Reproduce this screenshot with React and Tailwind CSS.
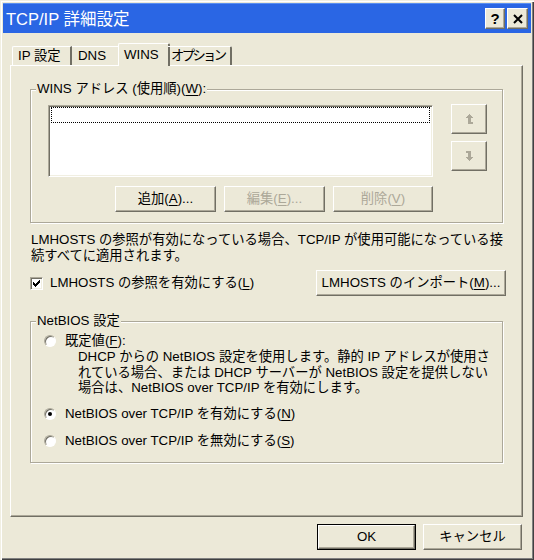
import React from "react";

const U = ({ children }) => <span className="underline underline-offset-[2px]">{children}</span>;

function Raised({ className = "", children }) {
  return (
    <div
      className={
        "flex items-center justify-center bg-[#ece9d8] border border-t-white border-l-white border-r-[#716f64] border-b-[#716f64] shadow-[inset_-1px_-1px_0_#aca899] " +
        className
      }
    >
      {children}
    </div>
  );
}

function Radio({ checked, children }) {
  return (
    <div className="flex items-center h-[16px]">
      <div className="w-[12px] h-[12px] rounded-full bg-white border border-t-[#aca899] border-l-[#aca899] border-r-white border-b-white shadow-[inset_1px_1px_0_#716f64] flex items-center justify-center">
        {checked && <div className="w-[4px] h-[4px] rounded-full bg-black" />}
      </div>
      <span className="ml-[9px] whitespace-nowrap">{children}</span>
    </div>
  );
}

function UpIcon() {
  return (
    <svg width="7" height="11" viewBox="0 0 7 11" shapeRendering="crispEdges">
      <g fill="#aca899">
        <rect x="3" y="0" width="1" height="1" />
        <rect x="2" y="1" width="3" height="1" />
        <rect x="1" y="2" width="5" height="1" />
        <rect x="0" y="3" width="7" height="1" />
        <rect x="2" y="4" width="3" height="5" />
        <rect x="2" y="8" width="5" height="2" />
      </g>
    </svg>
  );
}

function DownIcon() {
  return (
    <svg width="7" height="11" viewBox="0 0 7 11" shapeRendering="crispEdges">
      <g fill="#aca899">
        <rect x="0" y="0" width="5" height="2" />
        <rect x="2" y="2" width="3" height="5" />
        <rect x="0" y="6" width="7" height="1" />
        <rect x="1" y="7" width="5" height="1" />
        <rect x="2" y="8" width="3" height="1" />
        <rect x="3" y="9" width="1" height="1" />
      </g>
    </svg>
  );
}

export default function App() {
  return (
    <div className="w-[534px] h-[560px] p-[3px] bg-[#ece9d8] flex flex-col text-black text-[13.3px] leading-[16px] font-['Liberation_Sans','Noto_Sans_CJK_JP',sans-serif] shadow-[inset_1px_1px_0_#f1efe2,inset_2px_2px_0_#fff,inset_-1px_-1px_0_#404040,inset_-2px_-2px_0_#808080] overflow-hidden">
      {/* Title bar */}
      <div className="h-[30px] flex items-center pl-[3px] bg-[#2a66e4] border-t border-t-[#5a8ff0]">
        <span className="text-white text-[16.5px] whitespace-nowrap">TCP/IP 詳細設定</span>
        <div className="ml-auto mr-[3px] flex gap-[2px]">
          <Raised className="w-[20px] h-[21px]">
            <span className="font-bold text-[15px] leading-none font-['Liberation_Sans',sans-serif]">?</span>
          </Raised>
          <Raised className="w-[21px] h-[21px]">
            <svg width="10" height="10" viewBox="0 0 10 10">
              <path d="M1 1 L9 9 M9 1 L1 9" stroke="#000" strokeWidth="2" />
            </svg>
          </Raised>
        </div>
      </div>

      {/* Tabs */}
      <div className="mt-[10px] ml-[9px] flex items-end h-[22px] relative z-10">
        <div className="w-[60px] h-[19px] flex items-center pl-[5px] border-t border-l border-t-white border-l-white border-r-2 border-r-[#716f64] rounded-tl-[2px] whitespace-nowrap">
          IP 設定
        </div>
        <div className="w-[48px] h-[19px] flex items-center pl-[6px] border-t border-t-white whitespace-nowrap">
          DNS
        </div>
        <div className="-mx-[2px] -mb-px w-[52px] h-[23px] flex items-start pt-[3px] pl-[5px] bg-[#ece9d8] border-t border-l border-t-white border-l-white border-r-2 border-r-[#716f64] rounded-tl-[2px] rounded-tr-[2px] whitespace-nowrap">
          WINS
        </div>
        <div className="w-[64px] h-[19px] flex items-center pl-[3px] border-t border-t-white border-r-2 border-r-[#716f64] rounded-tr-[2px] whitespace-nowrap">
          <span className="tracking-[-2.6px]">オプション</span>
        </div>
      </div>

      {/* Panel */}
      <div className="ml-[7px] w-[513px] h-[452px] flex flex-col border-t border-l border-t-white border-l-white border-r border-b border-r-[#716f64] border-b-[#716f64] shadow-[inset_-1px_-1px_0_#aca899]">
        <fieldset className="ml-[19px] mt-[15px] w-[473px] border border-[#aca899] shadow-[inset_1px_1px_0_#fff,1px_1px_0_#fff]">
          <legend className="ml-[5px] px-[1px] leading-[16px] bg-[#ece9d8] whitespace-nowrap">
            WINS アドレス (使用順)(<U>W</U>):
          </legend>
          <div className="pl-[17px] pt-[8px] pb-[10px]">
            <div className="flex">
              <div className="w-[385px] h-[72px] bg-white border border-t-[#aca899] border-l-[#aca899] border-b-white border-r-white shadow-[inset_1px_1px_0_#716f64,inset_-1px_-1px_0_#f1efe2] pt-[1px] pl-[2px] pr-[2px]">
                <div className="h-[16px] border border-dotted border-black" />
              </div>
              <div className="ml-[18px] -mt-px flex flex-col gap-[7px]">
                <Raised className="w-[36px] h-[30px]">
                  <UpIcon />
                </Raised>
                <Raised className="w-[36px] h-[30px]">
                  <DownIcon />
                </Raised>
              </div>
            </div>
            <div className="mt-[9px] w-[385px] flex justify-end gap-[8px]">
              <Raised className="w-[101px] h-[26px]">
                <span className="whitespace-nowrap">追加(<U>A</U>)...</span>
              </Raised>
              <Raised className="w-[101px] h-[26px] text-[#aca899]">
                <span className="whitespace-nowrap">編集(<U>E</U>)...</span>
              </Raised>
              <Raised className="w-[100px] h-[26px] text-[#aca899]">
                <span className="whitespace-nowrap">削除(<U>V</U>)</span>
              </Raised>
            </div>
          </div>
        </fieldset>

        <p className="ml-[20px] mt-[9px] leading-[16px] whitespace-nowrap">
          LMHOSTS の参照が有効になっている場合、TCP/IP が使用可能になっている接
          <br />
          続すべてに適用されます。
        </p>

        <div className="mt-[6px] ml-[19px] w-[476px] flex items-center">
          <div className="w-[13px] h-[13px] bg-white border border-t-[#aca899] border-l-[#aca899] border-b-white border-r-white shadow-[inset_1px_1px_0_#716f64,inset_-1px_-1px_0_#f1efe2] flex items-center justify-center">
            <svg width="7" height="7" viewBox="0 0 7 7" shapeRendering="crispEdges">
              <g fill="#000">
                <rect x="6" y="0" width="1" height="1" />
                <rect x="5" y="1" width="2" height="1" />
                <rect x="0" y="2" width="1" height="1" />
                <rect x="4" y="2" width="3" height="1" />
                <rect x="0" y="3" width="2" height="1" />
                <rect x="3" y="3" width="3" height="1" />
                <rect x="0" y="4" width="5" height="1" />
                <rect x="1" y="5" width="3" height="1" />
                <rect x="2" y="6" width="1" height="1" />
              </g>
            </svg>
          </div>
          <span className="ml-[7px] whitespace-nowrap">
            LMHOSTS の参照を有効にする(<U>L</U>)
          </span>
          <Raised className="ml-auto w-[190px] h-[26px]">
            <span className="whitespace-nowrap">
              LMHOSTS のインポート(<U>M</U>)...
            </span>
          </Raised>
        </div>

        <fieldset className="ml-[19px] mt-[17px] w-[473px] border border-[#aca899] shadow-[inset_1px_1px_0_#fff,1px_1px_0_#fff]">
          <legend className="ml-[5px] px-[1px] leading-[16px] bg-[#ece9d8] whitespace-nowrap">
            NetBIOS 設定
          </legend>
          <div className="pl-[13px] pt-[4px] pb-[13px]">
            <Radio>
              既定値(<U>F</U>):
            </Radio>
            <p className="pl-[34px] leading-[15.5px] whitespace-nowrap">
              DHCP からの NetBIOS 設定を使用します。静的 IP アドレスが使用さ
              <br />
              れている場合、または DHCP サーバーが NetBIOS 設定を提供しない
              <br />
              場合は、NetBIOS over TCP/IP を有効にします。
            </p>
            <div className="mt-[10px]">
              <Radio checked>
                NetBIOS over TCP/IP を有効にする(<U>N</U>)
              </Radio>
            </div>
            <div className="mt-[11px]">
              <Radio>
                NetBIOS over TCP/IP を無効にする(<U>S</U>)
              </Radio>
            </div>
          </div>
        </fieldset>
      </div>

      {/* Bottom buttons */}
      <div className="mt-[7px] mr-[9px] flex justify-end gap-[7px]">
        <div className="w-[99px] h-[26px] border border-black flex">
          <Raised className="flex-1">OK</Raised>
        </div>
        <Raised className="w-[99px] h-[26px]">キャンセル</Raised>
      </div>
    </div>
  );
}
